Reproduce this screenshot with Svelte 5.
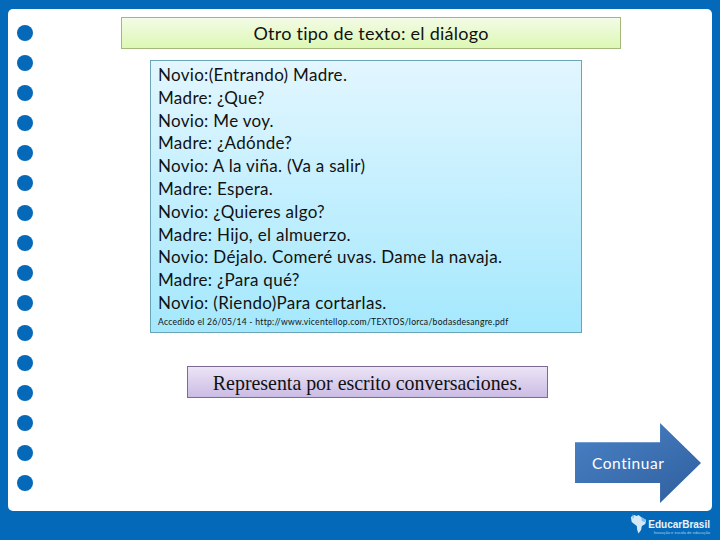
<script>
  const dots = Array.from({ length: 16 }, (_, i) => i);
  const lines = [
    'Novio:(Entrando) Madre.',
    'Madre: ¿Que?',
    'Novio: Me voy.',
    'Madre: ¿Adónde?',
    'Novio: A la viña. (Va a salir)',
    'Madre: Espera.',
    'Novio: ¿Quieres algo?',
    'Madre: Hijo, el almuerzo.',
    'Novio: Déjalo. Comeré uvas. Dame la navaja.',
    'Madre: ¿Para qué?',
    'Novio: (Riendo)Para cortarlas.'
  ];
</script>

<div class="page">
  <main class="sheet">
    <div class="dots">
      {#each dots as d (d)}
        <span class="dot"></span>
      {/each}
    </div>
    <div class="content">
      <h1 class="title">Otro tipo de texto: el diálogo</h1>
      <section class="dialog">
        {#each lines as line}
          <p>{line}</p>
        {/each}
        <p class="source">Accedido el 26/05/14 - http://www.vicentellop.com/TEXTOS/lorca/bodasdesangre.pdf</p>
      </section>
      <div class="task">Representa por escrito conversaciones.</div>
      <div class="next">Continuar</div>
    </div>
  </main>
  <footer class="footer">
    <div class="logo">
      <svg width="17" height="20" viewBox="0 0 20 20" preserveAspectRatio="none" aria-hidden="true">
        <path d="M1 3 L5 1 L8 2 L10 1 L13 3 L19 6 L18 10 L14 12 L13 16 L10 19.500 L8.500 16 L8 12 L5 10 L2 8 Z" fill="#d4e8f6" />
        <path d="M3 0 L5 3 L3 5 Z M13 3 L19 6 L17 8 L14 7 Z" fill="#7fc0e8" />
      </svg>
      <div class="logo-text">
        <span class="brand">EducarBrasil</span>
        <span class="tag">Inovação e escola de educação</span>
      </div>
    </div>
  </footer>
</div>

<style>
  :global(body) {
    margin: 0;
  }
  .page {
    width: 720px;
    height: 540px;
    box-sizing: border-box;
    background: #0569b9;
    padding: 9px 8px 0;
    display: flex;
    flex-direction: column;
    overflow: hidden;
    font-family: Lato, "Open Sans", sans-serif;
  }
  .sheet {
    height: 502px;
    flex: none;
    background: #fff;
    border-radius: 5px;
    display: flex;
  }
  .dots {
    width: 34px;
    flex: none;
    box-sizing: border-box;
    padding: 16px 0 0 9px;
    display: flex;
    flex-direction: column;
    gap: 14px;
  }
  .dot {
    width: 16px;
    height: 16px;
    border-radius: 50%;
    background: #0569b9;
    flex: none;
  }
  .content {
    flex: 1;
    box-sizing: border-box;
    padding-top: 8px;
    display: flex;
    flex-direction: column;
    align-items: flex-start;
  }
  .title {
    margin: 0 0 0 79px;
    width: 500px;
    height: 32px;
    box-sizing: border-box;
    border: 1px solid #a3b87a;
    background: linear-gradient(#f3fbe6, #ddf8b5);
    font-size: 18px;
    letter-spacing: 0.25px;
    font-weight: 400;
    color: #111;
    line-height: 30px;
    text-align: center;
    white-space: nowrap;
  }
  .dialog {
    margin: 11px 0 0 108px;
    width: 432px;
    height: 273px;
    box-sizing: border-box;
    border: 1px solid #6ba6b8;
    background: linear-gradient(#e2f6ff, #a4e8fd);
    padding: 3px 7px 0;
    color: #111;
  }
  .dialog p {
    margin: 0;
    font-size: 17px;
    letter-spacing: 0.3px;
    line-height: 22.800px;
    white-space: nowrap;
  }
  .dialog p.source {
    font-size: 8.600px;
    letter-spacing: 0.27px;
    line-height: 12px;
    margin-top: 1px;
  }
  .task {
    margin: 33px 0 0 145px;
    width: 361px;
    height: 32px;
    box-sizing: border-box;
    border: 1px solid #7d6a94;
    background: linear-gradient(#ece4f6, #cbbce4);
    font-family: "Liberation Serif", serif;
    font-size: 19.900px;
    line-height: 32px;
    text-align: center;
    color: #111;
    white-space: nowrap;
  }
  .next {
    margin: 25px 0 0 533px;
    width: 126px;
    height: 80px;
    background: linear-gradient(150deg, #4a82c6, #2f5f9e);
    clip-path: polygon(0 24%, 67.500% 24%, 67.500% 0, 100% 50%, 67.500% 100%, 67.500% 75%, 0 75%);
    color: #fff;
    font-size: 15.500px;
    letter-spacing: 0.55px;
    line-height: 80px;
    box-sizing: border-box;
    padding-left: 17px;
  }
  .footer {
    flex: 1;
    display: flex;
    justify-content: flex-end;
    align-items: flex-start;
    padding: 3px 2px 0 0;
  }
  .logo {
    display: flex;
    align-items: flex-start;
    gap: 1px;
  }
  .logo-text {
    display: flex;
    flex-direction: column;
    align-items: flex-end;
    margin-top: 5px;
  }
  .brand {
    color: #eaf4fb;
    font-family: "Liberation Sans", sans-serif;
    font-weight: 700;
    font-size: 10px;
    line-height: 11px;
  }
  .tag {
    color: #a9d0ea;
    font-family: "Liberation Sans", sans-serif;
    font-size: 4px;
    line-height: 6px;
    white-space: nowrap;
  }
</style>
